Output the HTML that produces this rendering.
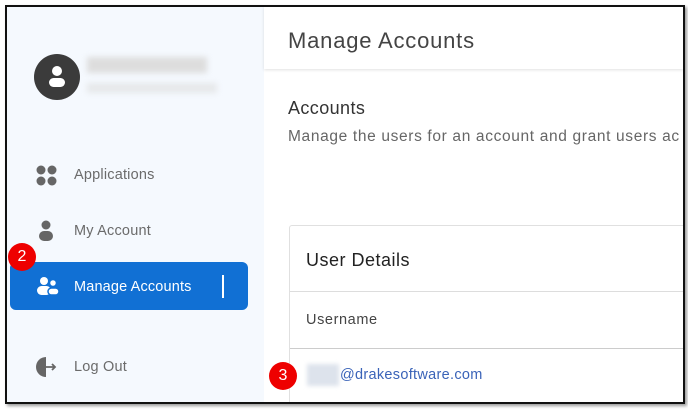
<html><head><style>
body{margin:0;width:688px;height:413px;background:#fff;position:relative;overflow:hidden;font-family:"Liberation Sans",sans-serif}
.frame{position:absolute;left:5px;top:5px;width:676px;height:395px;border:2px solid #111;overflow:hidden;background:#fff;box-shadow:2px 2px 3px rgba(0,0,0,.4)}
.side{position:absolute;left:0;top:0;width:257px;height:100%;background:#f5f9fe}
.t{position:absolute;white-space:nowrap}
.nav{color:#6b6b6b;font-size:14.5px;letter-spacing:.2px}
.ic{position:absolute}
.badge{position:absolute;width:28px;height:28px;border-radius:50%;background:#e00;color:#fff;font-size:16px;text-align:center;line-height:28px}
</style></head><body>
<div class="frame">
<div class="side">
 <div style="position:absolute;left:27px;top:47px;width:46px;height:46px;border-radius:50%;background:#3b3b3b"></div>
 <div style="position:absolute;left:45px;top:59px;width:10px;height:10px;border-radius:50%;background:#fff"></div>
 <div style="position:absolute;left:42px;top:71px;width:16px;height:9px;border-radius:6px;background:#fff"></div>
 <div style="position:absolute;left:80px;top:50px;width:120px;height:16px;background:#ddd;filter:blur(3px)"></div>
 <div style="position:absolute;left:80px;top:76px;width:130px;height:10px;background:#e6e8ea;filter:blur(3px)"></div>
 <svg class="ic" style="left:29px;top:158px" width="21" height="21"><circle cx="5" cy="5" r="4.5" fill="#666"/><circle cx="16" cy="5" r="4.5" fill="#666"/><circle cx="5" cy="16" r="4.5" fill="#666"/><circle cx="16" cy="16" r="4.5" fill="#666"/></svg>
 <div class="t nav" style="left:67px;top:160px">Applications</div>
 <svg class="ic" style="left:31px;top:213px" width="16" height="22"><circle cx="8" cy="5" r="4.5" fill="#666"/><rect x="1" y="11" width="14" height="10" rx="5" fill="#666"/></svg>
 <div class="t nav" style="left:67px;top:216px">My Account</div>
 <div style="position:absolute;left:3px;top:255px;width:238px;height:48px;border-radius:6px;background:#1170d4"></div>
 <svg class="ic" style="left:29px;top:269px" width="24" height="20"><circle cx="8" cy="5" r="4" fill="#fff"/><rect x="1" y="10" width="14" height="9" rx="4.5" fill="#fff"/><circle cx="17" cy="7" r="3.5" fill="#fff" stroke="#1170d4" stroke-width="1.5"/><rect x="12" y="12" width="11" height="7" rx="3.5" fill="#fff" stroke="#1170d4" stroke-width="1.5"/></svg>
 <div class="t" style="left:67px;top:272px;color:#fff;font-size:14.5px;letter-spacing:.15px">Manage Accounts</div>
 <div style="position:absolute;left:215px;top:268px;width:2px;height:23px;background:#fff"></div>
 <div class="badge" style="left:1px;top:236px">2</div>
 <svg class="ic" style="left:29px;top:349px" width="22" height="22"><path d="M10 1A10 10 0 0 0 10 21Z" fill="#666"/><path d="M10 11H19M16 8L19 11L16 14" stroke="#666" stroke-width="1.8" fill="none"/></svg>
 <div class="t nav" style="left:67px;top:352px">Log Out</div>
</div>
<div style="position:absolute;left:257px;top:0;right:0;height:62px;background:#fff;box-shadow:0 1px 3px rgba(0,0,0,.12)"></div>
<div class="t" style="left:281px;top:21px;font-size:22px;color:#444;letter-spacing:.8px">Manage Accounts</div>
<div class="t" style="left:281px;top:91px;font-size:18px;color:#333;letter-spacing:.4px">Accounts</div>
<div class="t" style="left:281px;top:121px;font-size:15.5px;color:#666;letter-spacing:.65px">Manage the users for an account and grant users ac</div>
<div style="position:absolute;left:282px;top:218px;width:400px;height:190px;border:1px solid #e0e0e0;border-radius:3px;background:#fff"></div>
<div class="t" style="left:299px;top:243px;font-size:18px;color:#222;letter-spacing:.5px">User Details</div>
<div style="position:absolute;left:283px;top:284px;right:0;height:1px;background:#ddd"></div>
<div class="t" style="left:299px;top:305px;font-size:14.5px;color:#444;letter-spacing:.6px">Username</div>
<div style="position:absolute;left:283px;top:341px;right:0;height:1px;background:#ccc"></div>
<div style="position:absolute;left:300px;top:357px;width:32px;height:22px;background:#dde3ec;filter:blur(2px)"></div>
<div class="t" style="left:333px;top:360px;font-size:14.5px;color:#3a63b8;letter-spacing:.3px">@drakesoftware.com</div>
<div class="badge" style="left:262px;top:355px">3</div>
</div>
</body></html>
